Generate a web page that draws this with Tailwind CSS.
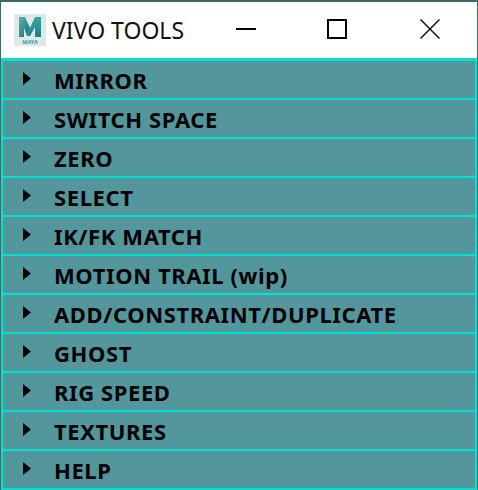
<!DOCTYPE html>
<html lang="en">
<head>
  <meta charset="UTF-8">
  <title>VIVO TOOLS</title>
  <script src="https://cdn.jsdelivr.net/npm/@tailwindcss/browser@4"></script>
</head>
<body class="w-[478px] h-[490px] overflow-hidden bg-[#00e0d0] font-['Noto_Sans',sans-serif]">
  <div class="h-[490px] border-t-2 border-l border-r border-[#3f686b] flex flex-col bg-[#00e0d0]">
    <!-- title bar -->
    <div class="h-[56px] shrink-0 bg-white flex items-center relative">
      <svg class="ml-[13px] w-[32px] h-[32px]" viewBox="0 0 32 32">
        <defs>
          <linearGradient id="mleft" x1="0" y1="0" x2="1" y2="1"><stop offset="0" stop-color="#5fb3b3"/><stop offset="1" stop-color="#0f6d74"/></linearGradient>
          <linearGradient id="mright" x1="0" y1="0" x2="0" y2="1"><stop offset="0" stop-color="#3ea3a6"/><stop offset="1" stop-color="#1b7f86"/></linearGradient>
        </defs>
        <rect width="32" height="32" fill="#dcebe9"/>
        <path d="M5 3h6l5 11-3 8L10 14v9H5z" fill="url(#mleft)"/>
        <path d="M21 3h6v20h-6V13l-5 9-3-0 3-8z" fill="url(#mright)"/>
        <text x="16" y="30" text-anchor="middle" font-size="5.5" font-weight="700" fill="#3b9aa0" font-family="Noto Sans, sans-serif">MAYA</text>
      </svg>
      <span class="ml-[6px] text-[23px] leading-none text-[#111]">VIVO TOOLS</span>
      <svg class="absolute left-[235px] top-[26px] w-[20px] h-[2px]" viewBox="0 0 20 2"><rect width="20" height="2" fill="#000"/></svg>
      <svg class="absolute left-[326px] top-[17px] w-[20px] h-[20px]" viewBox="0 0 20 20"><rect x="1" y="1" width="18" height="18" fill="none" stroke="#000" stroke-width="2"/></svg>
      <svg class="absolute left-[419px] top-[17px] w-[20px] h-[20px]" viewBox="0 0 20 20"><path d="M0.5 0.5L19.5 19.5M19.5 0.5L0.5 19.5" fill="none" stroke="#111" stroke-width="1.5"/></svg>
    </div>
    <!-- sections -->
    <div class="pt-[3px] flex flex-col gap-[2px] px-[2px]">
      <div class="h-[37px] shrink-0 bg-[#53979c] rounded-[2px] flex items-center relative"><svg class="absolute left-[20px] top-[11px] w-[8px] h-[13px]" viewBox="0 0 8 13"><path d="M0 0L8 6.5L0 13z" fill="#000"/></svg><span class="ml-[51px] text-[22px] leading-none font-bold text-black tracking-[0.6px]">MIRROR</span></div>
      <div class="h-[37px] shrink-0 bg-[#53979c] rounded-[2px] flex items-center relative"><svg class="absolute left-[20px] top-[11px] w-[8px] h-[13px]" viewBox="0 0 8 13"><path d="M0 0L8 6.5L0 13z" fill="#000"/></svg><span class="ml-[51px] text-[22px] leading-none font-bold text-black tracking-[0.6px]">SWITCH SPACE</span></div>
      <div class="h-[37px] shrink-0 bg-[#53979c] rounded-[2px] flex items-center relative"><svg class="absolute left-[20px] top-[11px] w-[8px] h-[13px]" viewBox="0 0 8 13"><path d="M0 0L8 6.5L0 13z" fill="#000"/></svg><span class="ml-[51px] text-[22px] leading-none font-bold text-black tracking-[0.6px]">ZERO</span></div>
      <div class="h-[37px] shrink-0 bg-[#53979c] rounded-[2px] flex items-center relative"><svg class="absolute left-[20px] top-[11px] w-[8px] h-[13px]" viewBox="0 0 8 13"><path d="M0 0L8 6.5L0 13z" fill="#000"/></svg><span class="ml-[51px] text-[22px] leading-none font-bold text-black tracking-[0.6px]">SELECT</span></div>
      <div class="h-[37px] shrink-0 bg-[#53979c] rounded-[2px] flex items-center relative"><svg class="absolute left-[20px] top-[11px] w-[8px] h-[13px]" viewBox="0 0 8 13"><path d="M0 0L8 6.5L0 13z" fill="#000"/></svg><span class="ml-[51px] text-[22px] leading-none font-bold text-black tracking-[0.6px]">IK/FK MATCH</span></div>
      <div class="h-[37px] shrink-0 bg-[#53979c] rounded-[2px] flex items-center relative"><svg class="absolute left-[20px] top-[11px] w-[8px] h-[13px]" viewBox="0 0 8 13"><path d="M0 0L8 6.5L0 13z" fill="#000"/></svg><span class="ml-[51px] text-[22px] leading-none font-bold text-black tracking-[0.6px]">MOTION TRAIL (wip)</span></div>
      <div class="h-[37px] shrink-0 bg-[#53979c] rounded-[2px] flex items-center relative"><svg class="absolute left-[20px] top-[11px] w-[8px] h-[13px]" viewBox="0 0 8 13"><path d="M0 0L8 6.5L0 13z" fill="#000"/></svg><span class="ml-[51px] text-[22px] leading-none font-bold text-black tracking-[0.6px]">ADD/CONSTRAINT/DUPLICATE</span></div>
      <div class="h-[37px] shrink-0 bg-[#53979c] rounded-[2px] flex items-center relative"><svg class="absolute left-[20px] top-[11px] w-[8px] h-[13px]" viewBox="0 0 8 13"><path d="M0 0L8 6.5L0 13z" fill="#000"/></svg><span class="ml-[51px] text-[22px] leading-none font-bold text-black tracking-[0.6px]">GHOST</span></div>
      <div class="h-[37px] shrink-0 bg-[#53979c] rounded-[2px] flex items-center relative"><svg class="absolute left-[20px] top-[11px] w-[8px] h-[13px]" viewBox="0 0 8 13"><path d="M0 0L8 6.5L0 13z" fill="#000"/></svg><span class="ml-[51px] text-[22px] leading-none font-bold text-black tracking-[0.6px]">RIG SPEED</span></div>
      <div class="h-[37px] shrink-0 bg-[#53979c] rounded-[2px] flex items-center relative"><svg class="absolute left-[20px] top-[11px] w-[8px] h-[13px]" viewBox="0 0 8 13"><path d="M0 0L8 6.5L0 13z" fill="#000"/></svg><span class="ml-[51px] text-[22px] leading-none font-bold text-black tracking-[0.6px]">TEXTURES</span></div>
      <div class="h-[37px] shrink-0 bg-[#53979c] rounded-[2px] flex items-center relative"><svg class="absolute left-[20px] top-[11px] w-[8px] h-[13px]" viewBox="0 0 8 13"><path d="M0 0L8 6.5L0 13z" fill="#000"/></svg><span class="ml-[51px] text-[22px] leading-none font-bold text-black tracking-[0.6px]">HELP</span></div>
    </div>
  </div>
</body>
</html>
